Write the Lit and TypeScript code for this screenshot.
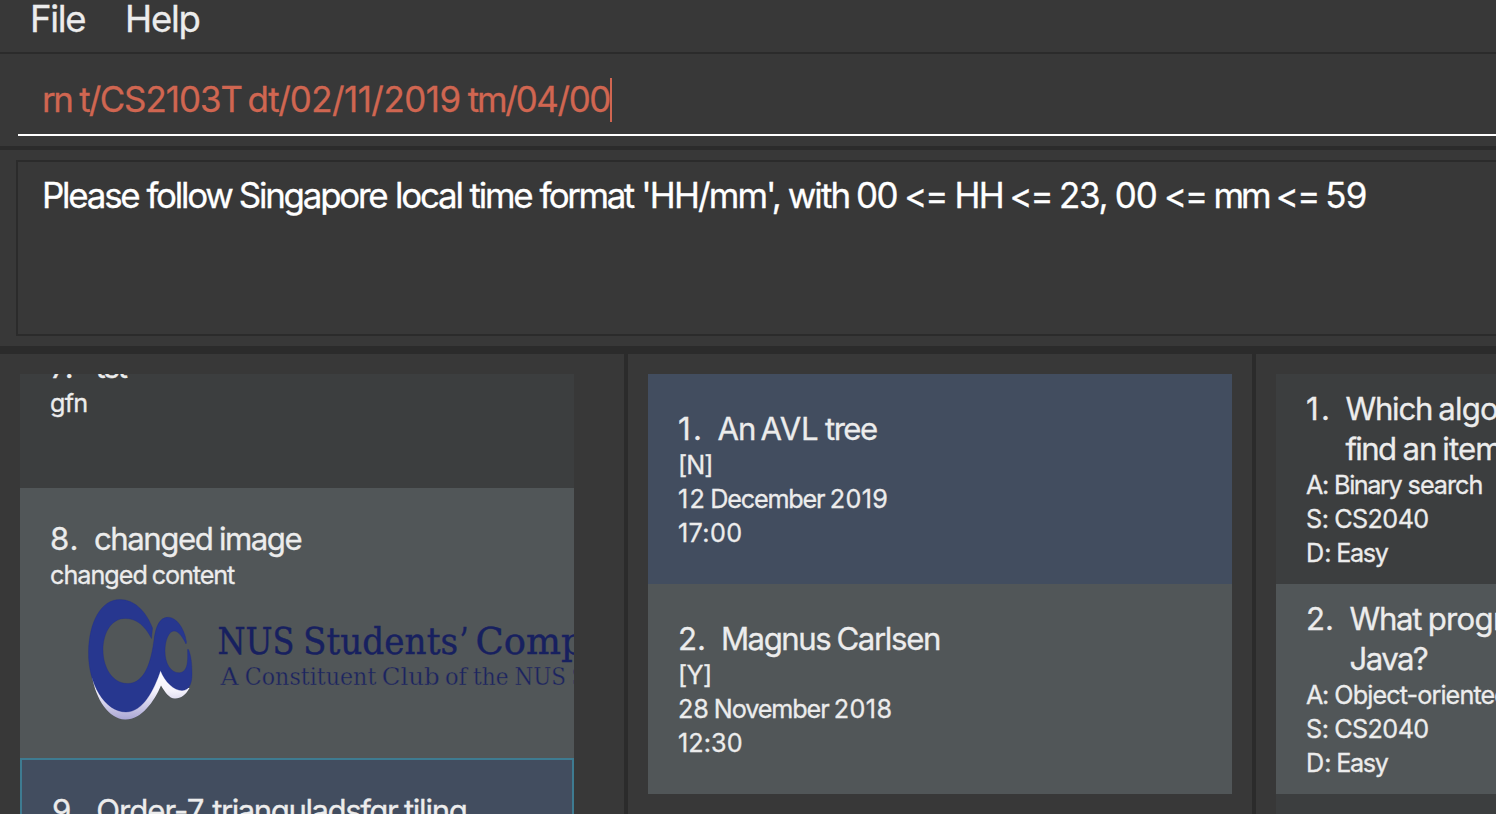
import { LitElement, html, css, svg, nothing } from "lit";
import { customElement, property } from "lit/decorators.js";
import { classMap } from "lit/directives/class-map.js";

/** A run of text with its tracking and the width of its word gaps, in pixels. */
type Run = [text: string, tracking: number, gap?: number];
type Line = Run[];

interface CardData {
  index: Line;
  indexWidth: number;
  title: Line[];
  details: Line[];
  tone: "dark" | "light" | "selected";
  height: number;
  logo?: boolean;
  focused?: boolean;
}

const renderLine = (line: Line) =>
  line.map(([text, tracking, gap]) => {
    const word = gap === undefined ? "0" : `calc(${(gap - tracking).toFixed(2)}px - 0.281em)`;
    return html`<span style="letter-spacing:${tracking}px;word-spacing:${word}">${text}</span>`;
  });

const COMMAND: Line = [
  ["rn ", -2.49, 7.9],
  ["t/", -1.8],
  ["CS2103T ", -1.01, 5.6],
  ["dt/", -1.28],
  ["02/11/2019 ", -0.5, 7.1],
  ["tm/", -2.16],
  ["04/00", -1.4],
];

const RESULT: Line = [
  ["Please ", -2.22, 8],
  ["follow ", -2.22, 7.1],
  ["Singapore ", -2.22, 8.5],
  ["local ", -2.19, 7.7],
  ["time ", -2.17, 7.9],
  ["format ", -2.45, 8.4],
  ["'HH/mm', ", -1.85, 7.6],
  ["with ", -1.88, 6.8],
  ["00 ", -1.5, 7.1],
  ["<= ", -2, 8.1],
  ["HH ", -1.5, 6.2],
  ["<= ", -2, 7.3],
  ["23, ", -1.25, 7.5],
  ["00 ", -1, 7],
  ["<= ", -2, 7.3],
  ["mm ", -3.04, 7.2],
  ["<= ", -1.6, 6.5],
  ["59", -0.7],
];

const NOTES: CardData[] = [
  { index: [["7.", 1]], indexWidth: 45.6, title: [[["tst", -2.06]]], details: [[["gfn", -0.8]]], tone: "dark", height: 210 },
  {
    index: [["8.", 0.8]], indexWidth: 44,
    title: [[["changed ", -1.47, 6.7], ["image", -1.53]]],
    details: [[["changed ", -1.01, 5], ["content", -1.12]]],
    tone: "light", height: 270, logo: true,
  },
  {
    index: [["9.", 0.8]], indexWidth: 44.2,
    title: [[["Order-7 ", -1, 8.9], ["trianguladsfgr ", -1.47, 6.6], ["tiling", -1.27]]],
    details: [], tone: "selected", height: 210, focused: true,
  },
];

const EVENTS: CardData[] = [
  {
    index: [["1.", 2.2]], indexWidth: 39.5,
    title: [[["An ", -1.12, 5.3], ["AVL ", -0.15, 6.4], ["tree", -1.56]]],
    details: [
      [["[N]", -0.9]],
      [["12 ", 1.3, 4.1], ["December ", -1.2, 5.5], ["2019", 0.3]],
      [["17:00", 0.35]],
    ],
    tone: "selected", height: 210,
  },
  {
    index: [["2.", -0.1]], indexWidth: 42.9,
    title: [[["Magnus ", -1.47, 6.2], ["Carlsen", -1.36]]],
    details: [
      [["[Y]", -0.7]],
      [["28 ", 0, 4.8], ["November ", -1.1, 5.2], ["2018", 0.4]],
      [["12:30", 0.08]],
    ],
    tone: "light", height: 210,
  },
];

const QUESTIONS: CardData[] = [
  {
    index: [["1.", 2.2]], indexWidth: 39.5,
    title: [
      [["Which ", -1.28, 6.2], ["algorithm is used to", -0.86]],
      [["find ", -1.69, 7.2], ["an ", -1.13, 6], ["item in a list?", -0.88]],
    ],
    details: [
      [["A: ", -1.5, 6.4], ["Binary ", -1.4, 6.3], ["search", -1]],
      [["S: ", -0.3, 5.4], ["CS2040", -0.6]],
      [["D: ", 0, 4.8], ["Easy", -1.35]],
    ],
    tone: "dark", height: 210,
  },
  {
    index: [["2.", -0.1]], indexWidth: 43.5,
    title: [
      [["What ", -1.32, 6.6], ["programming style is", -0.71]],
      [["Java?", -1.6]],
    ],
    details: [
      [["A: ", -1.5, 6.7], ["Object-oriented", -0.9]],
      [["S: ", -0.3, 5.4], ["CS2040", -0.6]],
      [["D: ", 0, 4.8], ["Easy", -1.35]],
    ],
    tone: "light", height: 210,
  },
  { index: [], indexWidth: 0, title: [], details: [], tone: "dark", height: 210 },
];

/** Words of the club banner: text, left edge, set width. */
const NAME: [string, number, number][] = [
  ["NUS", 217.5, 77],
  ["Students", 303, 155],
  ["’", 459.5, 9],
  ["Computing", 475.5, 207],
];
const TAGLINE: [string, number, number][] = [
  ["A", 220.5, 18],
  ["Constituent", 244.8, 131.5],
  ["Club", 381.8, 58],
  ["of", 445, 22],
  ["the", 473, 35.5],
  ["NUS", 514.5, 51.5],
  ["Students", 571.5, 100],
];

@customElement("club-logo")
export class ClubLogo extends LitElement {
  static styles = css`
    :host { display: block; height: 136px; -webkit-text-stroke: 0; }
    svg { display: block; }
    text { font-family: "DejaVu Serif", serif; }
    .name { font-size: 36.5px; fill: #17205f; stroke: #17205f; stroke-width: 0.4px; -webkit-text-stroke: 0.4px #17205f; }
    .tagline { font-size: 24.6px; fill: #1b2360; stroke: #515658; stroke-width: 0.4px; -webkit-text-stroke: 0.4px #515658; }
  `;
  render() {
    const word = (cls: string, y: number) => ([t, x, w]: [string, number, number]) =>
      svg`<text class=${cls} x=${x} y=${y} textLength=${w} lengthAdjust="spacingAndGlyphs">${t}</text>`;
    return html`<svg width="524" height="136" viewBox="50 592 524 136">
      <defs>
        <linearGradient id="swoosh" x1="0" y1="0" x2="0" y2="1">
          <stop offset="0" stop-color="#ffffff"/>
          <stop offset="0.45" stop-color="#f4f2fb"/>
          <stop offset="1" stop-color="#aaa6d4"/>
        </linearGradient>
      </defs>
      <path fill="url(#swoosh)" d="M92 676C96 700 109 719 125 719.500C141 720 154 702 161 685.500C165 692 169 698.500 175 698.500C181 698.500 186 694.500 189.500 688L178 688L161 668L140 700L110 706Z"/>
      <path fill="#27378f" stroke="#1a2a88" stroke-width="0.3" fill-rule="evenodd" d="M152.500 628C146 611 134 599.500 120 599.500C101 599.500 89 622 88.500 652C88 684 105 712 126 712C143 712 154 690 160.500 670.500C165 682 174 690.500 182 690.500C190 690.500 192 682 192 674C192 664 191 655 188.500 649.500L187.500 649.500C188 661 188 672 179.500 672.800C171 673 165 664 165 651C165 640 169 631 174 631C179 631 183 638 186 644L186.500 642C184 627 176 617.300 168 617.300C159 617.300 155.500 628 154 640C151 662 145 683 128 683.500C113 684 103 668 103 650C103 632 112 618.500 125 618.500C137 618.500 145 626 151.500 638.500Z"/>
      ${NAME.map(word("name", 653.6))}
      ${TAGLINE.map(word("tagline", 685.2))}
    </svg>`;
  }
}

@customElement("list-card")
export class ListCard extends LitElement {
  @property({ attribute: false }) data!: CardData;
  static styles = css`
    :host { display: block; flex: none; }
    .card {
      box-sizing: border-box; padding: 0 0 0 30px; overflow: hidden; white-space: pre;
      display: flex; flex-direction: column; justify-content: center; color: #ececec;
    }
    .dark { background: #3c3e3f; }
    .light { background: #515658; }
    .selected { background: #424d5f; }
    .focused { border: 2px solid #3e7b91; justify-content: flex-start; padding-top: 30px; }
    .head { display: flex; font-size: 31.2px; line-height: 40px; padding-top: 1px; margin-bottom: -1px; }
    .index { flex: none; }
    .detail { font-size: 25.2px; line-height: 34px; }
  `;
  render() {
    const d = this.data;
    return html`<div class=${classMap({ card: true, [d.tone]: true, focused: !!d.focused })} style="height:${d.height}px">${this.body(d)}</div>`;
  }
  private body(d: CardData) {
    return html`<div class="head"><div class="index" style="width:${d.indexWidth}px">${renderLine(d.index)}</div><div>${d.title.map((l) => html`<div>${renderLine(l)}</div>`)}</div></div>${d.details.map((l) => html`<div class="detail">${renderLine(l)}</div>`)}${d.logo ? html`<club-logo></club-logo>` : nothing}`;
  }
}

@customElement("app-root")
export class AppRoot extends LitElement {
  static styles = css`
    :host {
      display: flex; flex-direction: column; height: 814px; overflow: hidden;
      background: #383838; font-family: Inter, sans-serif; white-space: nowrap;
      font-variant-ligatures: none; font-feature-settings: "calt" 0; -webkit-text-stroke: 0.3px;
    }
    .menu {
      height: 52px; flex: none; border-bottom: 2px solid #2b2b2b; display: flex; gap: 39.8px;
      padding-left: 30px; font-size: 36.5px; line-height: 38px; letter-spacing: -1.3px; color: #ececec;
    }
    .command { flex: none; height: 92px; border-bottom: 4px solid #2b2b2b; padding-left: 18px; }
    .field {
      height: 80px; border-bottom: 2px solid #fff; padding-left: 24px; display: flex; align-items: center;
      font-size: 34.9px; color: #d06651; white-space: pre;
    }
    .field .text { padding-top: 10px; line-height: 42px; }
    .caret { width: 2px; height: 44px; margin-top: 12px; background: #d06651; margin-left: 0.4px; }
    .result { flex: none; height: 196px; box-sizing: border-box; padding: 10px 0 10px 16px; }
    .box {
      height: 176px; box-sizing: border-box; border: 2px solid #2b2b2b; border-right: 0; padding: 11px 0 0 24px;
      font-size: 34.9px; line-height: 44px; color: #fff; white-space: pre;
    }
    .panels { flex: 1; min-height: 0; display: flex; border-top: 8px solid #2b2b2b; }
    .panel { flex: none; box-sizing: border-box; border-right: 4px solid #2b2b2b; padding: 20px 20px 0; }
    .notes { width: 628px; padding-right: 50px; }
    .events { width: 628px; }
    .questions { width: 628px; border-right: 0; }
    .list { height: 440px; overflow: hidden; display: flex; flex-direction: column; }
    .scrolled { margin-top: -96px; }
  `;
  render() {
    return html`
      <nav class="menu"><span>File</span><span>Help</span></nav>
      <section class="command"><div class="field"><div class="text">${renderLine(COMMAND)}</div><i class="caret"></i></div></section>
      <section class="result"><div class="box">${renderLine(RESULT)}</div></section>
      <main class="panels">
        <div class="panel notes"><div class="list">${NOTES.map((d, i) => html`<list-card class=${i === 0 ? "scrolled" : ""} .data=${d}></list-card>`)}</div></div>
        <div class="panel events"><div class="list">${EVENTS.map((d) => html`<list-card .data=${d}></list-card>`)}</div></div>
        <div class="panel questions"><div class="list">${QUESTIONS.map((d) => html`<list-card .data=${d}></list-card>`)}</div></div>
      </main>`;
  }
}
